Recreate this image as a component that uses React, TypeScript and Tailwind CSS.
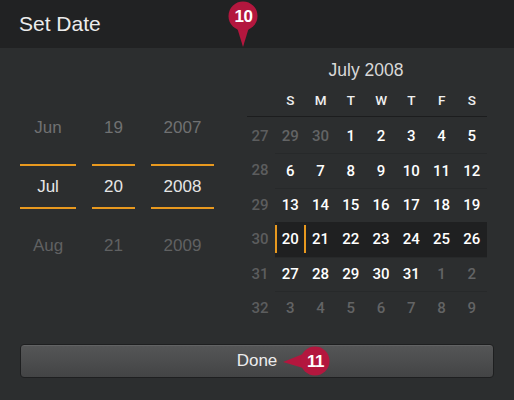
const weeks: { wk: number; days: { d: number; cur: boolean }[] }[] = [
  { wk: 27, days: [29, 30, 1, 2, 3, 4, 5].map((d, i) => ({ d, cur: i > 1 })) },
  { wk: 28, days: [6, 7, 8, 9, 10, 11, 12].map((d) => ({ d, cur: true })) },
  { wk: 29, days: [13, 14, 15, 16, 17, 18, 19].map((d) => ({ d, cur: true })) },
  { wk: 30, days: [20, 21, 22, 23, 24, 25, 26].map((d) => ({ d, cur: true })) },
  { wk: 31, days: [27, 28, 29, 30, 31, 1, 2].map((d, i) => ({ d, cur: i < 5 })) },
  { wk: 32, days: [3, 4, 5, 6, 7, 8, 9].map((d) => ({ d, cur: false })) },
]

const dayNames = ['S', 'M', 'T', 'W', 'T', 'F', 'S']

function PickerColumn({ items, width }: { items: [string, string, string]; width: string }) {
  return (
    <div className={`flex flex-col items-center ${width}`}>
      <div className="flex h-[40px] items-center text-[17px] text-[#707172]">{items[0]}</div>
      <div className="h-[16px]" />
      <div className="h-[2px] w-full bg-[#e8991f]" />
      <div className="flex h-[41px] items-center text-[17px] text-[#e6e6e6]">{items[1]}</div>
      <div className="h-[2px] w-full bg-[#e8991f]" />
      <div className="h-[17px]" />
      <div className="flex h-[40px] items-center text-[17px] text-[#606162]">{items[2]}</div>
    </div>
  )
}

function Callout({ n, className, pointer }: { n: string; className: string; pointer: 'down' | 'left' }) {
  return (
    <div className={`absolute ${className}`}>
      <svg width="64" height="64" viewBox="0 0 64 64" className="absolute left-0 top-0">
        {pointer === 'down' ? (
          <path d="M25 40 L39 40 L32 63 Z" fill="#b3173e" />
        ) : (
          <path d="M20 25 L20 39 L0 33 Z" fill="#b3173e" />
        )}
        <circle cx="32" cy="32" r="14.5" fill="#b3173e" />
      </svg>
      <div
        className="absolute left-[18px] top-[18px] flex h-[29px] w-[29px] items-center justify-center text-[17px] font-bold tracking-[-0.5px] text-white"
        style={{ fontFamily: '"Liberation Sans", Arial, sans-serif' }}
      >
        {n}
      </div>
    </div>
  )
}

export default function App() {
  return (
    <div
      className="relative flex h-[400px] w-[514px] flex-col overflow-hidden bg-[#2c2e2f]"
      style={{ fontFamily: '"Liberation Sans", Arial, sans-serif' }}
    >
      <div className="flex h-[48px] items-center bg-[#212223] px-[19px] text-[21px] text-[#ececec]">
        Set Date
      </div>

      <div className="flex">
        <div className="flex w-[245px] gap-[16px] pl-[20px] pt-[60px]">
          <PickerColumn items={['Jun', 'Jul', 'Aug']} width="w-[56px]" />
          <PickerColumn items={['19', '20', '21']} width="w-[43px]" />
          <PickerColumn items={['2007', '2008', '2009']} width="w-[63px]" />
        </div>

        <div className="flex w-[242px] flex-col" style={{ fontFamily: 'Roboto, "Liberation Sans", sans-serif' }}>
          <div
            className="mt-[12px] flex h-[20px] items-center justify-center text-[17.5px] text-[#d8d8d8]"
            style={{ fontFamily: '"Liberation Sans", Arial, sans-serif' }}
          >
            July 2008
          </div>
          <div className="mt-[10px] grid h-[20px] grid-cols-8 items-center text-center text-[13.5px] font-medium text-[#f0f0f0]">
            <div />
            {dayNames.map((n, i) => (
              <div key={i}>{n}</div>
            ))}
          </div>
          <div className="ml-[2px] mt-[6px] h-px bg-[#1c1d1e]" />
          <div className="pt-[2px]">
            {weeks.map((w, wi) => (
              <div key={w.wk} className="grid h-[34.4px] grid-cols-8 items-center text-center text-[15px] font-medium">
                <div className="text-[#5c5d5e]">{w.wk}</div>
                {w.days.map((day, di) => {
                  const hl = w.wk === 30
                  return (
                    <div
                      key={di}
                      className={`relative flex h-full items-center justify-center ${
                        hl ? 'bg-[#1f2021]' : wi > 0 ? 'border-t border-[#27292a]' : ''
                      } ${day.cur ? 'text-white' : 'text-[#636465]'}`}
                    >
                      {hl && di === 0 && (
                        <>
                          <span className="absolute left-0 top-[3px] h-[28px] w-[2px] bg-[#e8991f]" />
                          <span className="absolute right-0 top-[3px] h-[28px] w-[2px] bg-[#e8991f]" />
                        </>
                      )}
                      {day.d}
                    </div>
                  )
                })}
              </div>
            ))}
          </div>
        </div>
      </div>

      <div className="mt-auto px-[20px] pb-[22px]">
        <div className="flex h-[34px] items-center justify-center rounded-[4px] border border-[#1e1f20] bg-gradient-to-b from-[#555657] to-[#434445] text-[17px] text-[#ececec] shadow-[inset_0_1px_0_rgba(255,255,255,0.08)]">
          Done
        </div>
      </div>

      <Callout n="10" pointer="down" className="left-[211px] top-[-16px] h-[64px] w-[64px]" />
      <Callout n="11" pointer="left" className="left-[283px] top-[329px] h-[64px] w-[64px]" />
    </div>
  )
}
